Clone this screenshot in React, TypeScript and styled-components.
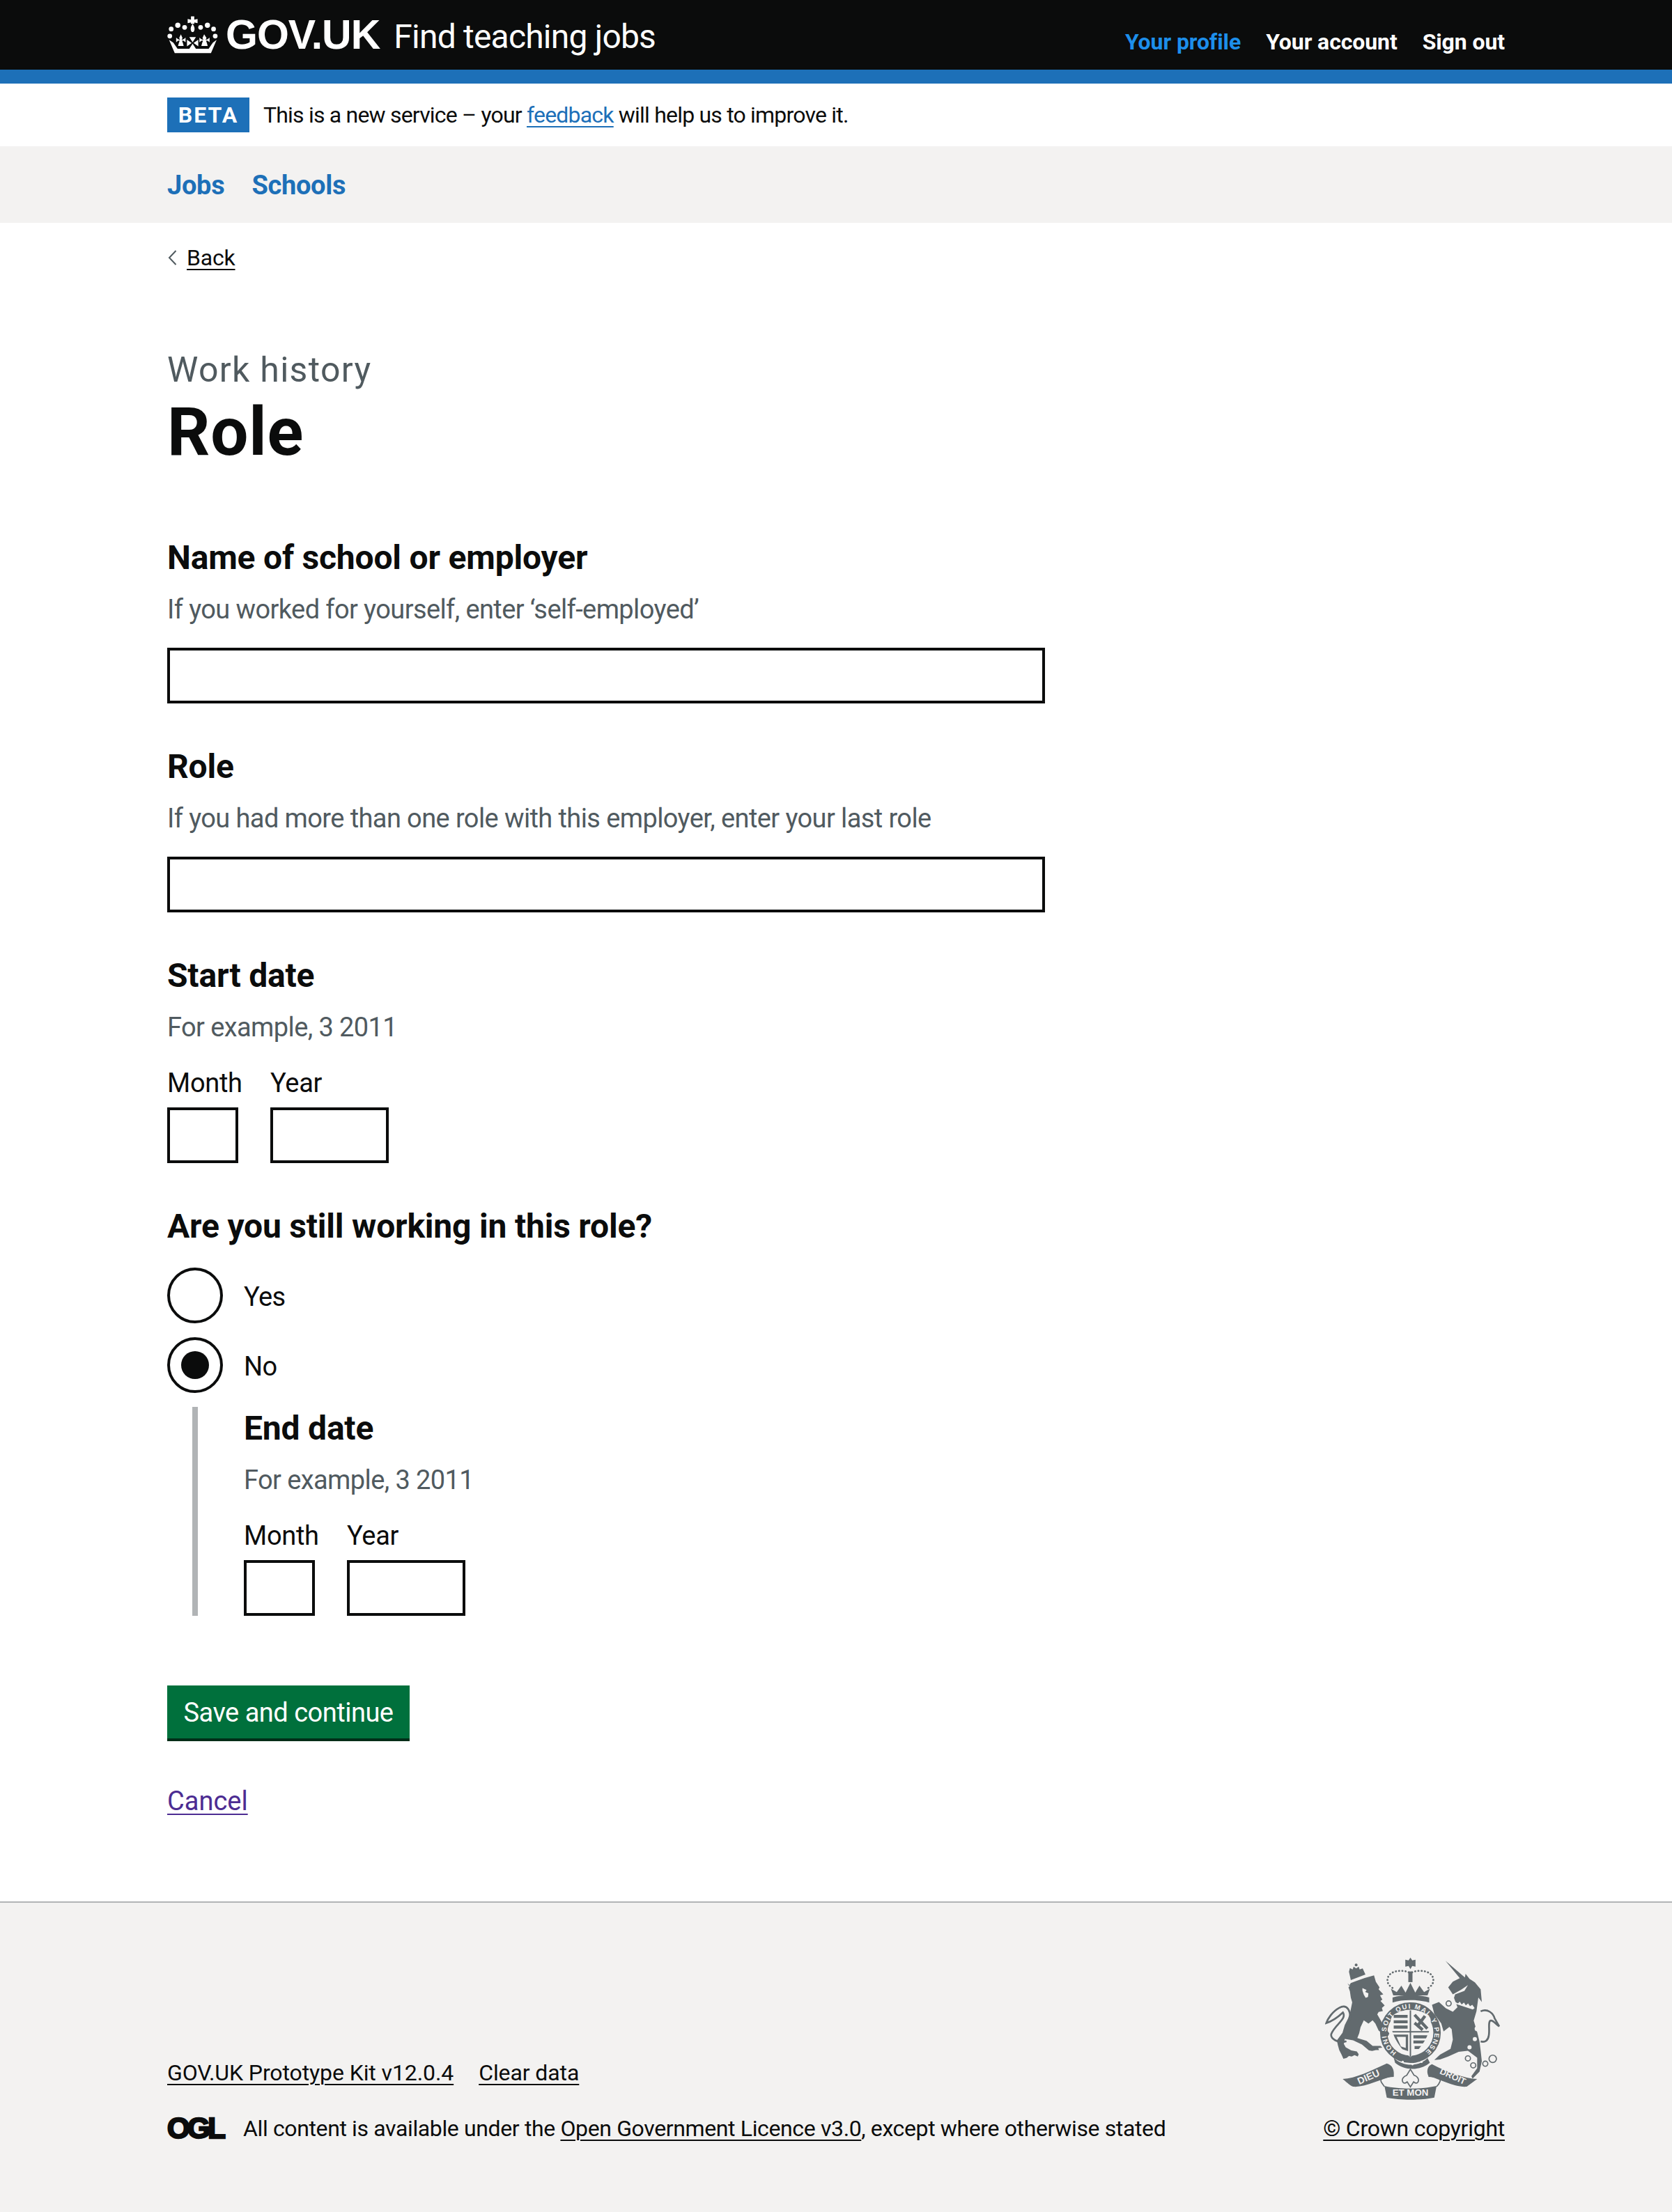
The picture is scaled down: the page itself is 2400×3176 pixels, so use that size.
import React from "react";
import styled, { createGlobalStyle } from "styled-components";

const GlobalStyle = createGlobalStyle`
  html, body {
    margin: 0;
    padding: 0;
    background: #fff;
  }
  body {
    font-family: Roboto, "Noto Sans", Arial, sans-serif;
    color: #0b0c0c;
    -webkit-font-smoothing: antialiased;
  }
`;

const Page = styled.div`
  width: 2400px;
  min-height: 3176px;
  display: flex;
  flex-direction: column;
`;

const Header = styled.header`
  height: 100px;
  background: #0b0c0c;
  border-bottom: 20px solid #1d70b8;
  padding: 0 240px;
  display: flex;
  align-items: center;
  justify-content: space-between;
`;

const Brand = styled.div`
  display: flex;
  align-items: center;
  color: #fff;
`;

const CrownLogo = styled.svg`
  width: 75px;
  height: 60px;
  margin-right: 9px;
  flex: none;
`;

const LogoText = styled.span`
  font-family: "Liberation Sans", Arial, sans-serif;
  font-weight: 700;
  font-size: 59px;
  line-height: 60px;
  letter-spacing: -1px;
`;

const ServiceName = styled.span`
  font-size: 48px;
  line-height: 60px;
  margin-left: 20px;
  padding-top: 5px;
  letter-spacing: -0.8px;
`;

const HeaderNav = styled.nav`
  display: flex;
  gap: 36px;
  padding-top: 20px;
`;

const HeaderLink = styled.a<{ $active?: boolean }>`
  font-size: 32px;
  line-height: 40px;
  font-weight: 700;
  letter-spacing: -0.1px;
  color: ${(props) => (props.$active ? "#1d8feb" : "#fff")};
`;

const Banner = styled.div`
  height: 90px;
  padding: 20px 240px 0;
  box-sizing: border-box;
  display: flex;
  align-items: flex-start;
  gap: 20px;
  font-size: 32px;
  line-height: 50px;
  letter-spacing: -0.8px;
`;

const Tag = styled.strong`
  width: 118px;
  height: 50px;
  background: #1d70b8;
  color: #fff;
  font-size: 32px;
  font-weight: 700;
  letter-spacing: 2px;
  text-align: center;
`;

const BlueLink = styled.a`
  color: #1d70b8;
  text-decoration: underline;
  text-underline-offset: 5px;
  text-decoration-thickness: 2px;
`;

const SubNav = styled.nav`
  height: 110px;
  box-sizing: border-box;
  padding: 2px 240px 0;
  background: #f3f2f1;
  display: flex;
  align-items: center;
  gap: 39px;
`;

const SubNavLink = styled.a`
  font-size: 38px;
  font-weight: 700;
  letter-spacing: -0.3px;
  color: #1d70b8;
`;

const Main = styled.main`
  padding: 28px 240px 0;
  height: 2410px;
  box-sizing: border-box;
  flex: none;
`;

const BackLink = styled.a`
  display: inline-flex;
  align-items: center;
  gap: 14px;
  font-size: 32px;
  line-height: 44px;
  letter-spacing: -0.2px;
  color: #0b0c0c;
  & > span {
    text-decoration: underline;
    text-underline-offset: 5px;
    text-decoration-thickness: 2px;
  }
`;

const Caption = styled.div`
  margin-top: 108px;
  padding-top: 2px;
  font-size: 50px;
  line-height: 58px;
  letter-spacing: 1.3px;
  color: #505a5f;
`;

const Title = styled.h1`
  margin: 10px 0 100px;
  font-size: 96px;
  line-height: 100px;
  font-weight: 700;
  letter-spacing: 0.8px;
`;

const Field = styled.div`
  margin-bottom: 60px;
`;

const Label = styled.div`
  padding-top: 2px;
  font-size: 48px;
  line-height: 58px;
  font-weight: 700;
  letter-spacing: -0.2px;
  margin-bottom: 20px;
`;

const Hint = styled.div`
  padding-top: 1px;
  font-size: 38px;
  line-height: 49px;
  letter-spacing: -0.6px;
  color: #505a5f;
  margin-bottom: 30px;
`;

const TextInput = styled.input`
  display: block;
  box-sizing: border-box;
  width: 1260px;
  height: 80px;
  border: 4px solid #0b0c0c;
  border-radius: 0;
  background: #fff;
  padding: 0;
`;

const DateRow = styled.div`
  display: flex;
  gap: 46px;
`;

const DatePart = styled.div<{ $width: number }>`
  width: ${(props) => props.$width}px;
  display: flex;
  flex-direction: column;
  gap: 10px;
`;

const DateLabel = styled.label`
  font-size: 38px;
  line-height: 50px;
  letter-spacing: -0.3px;
  white-space: nowrap;
`;

const DateInput = styled.input`
  display: block;
  box-sizing: border-box;
  width: 100%;
  height: 80px;
  border: 4px solid #0b0c0c;
  border-radius: 0;
  background: #fff;
  padding: 0;
`;

const Options = styled.div`
  display: flex;
  flex-direction: column;
  gap: 20px;
  margin-top: 30px;
`;

const Option = styled.label`
  display: flex;
  align-items: center;
  gap: 30px;
  height: 80px;
  font-size: 38px;
  letter-spacing: -0.6px;
  & > span:last-child {
    padding-top: 3px;
  }
`;

const RadioMark = styled.span<{ $checked?: boolean }>`
  width: 80px;
  height: 80px;
  box-sizing: border-box;
  border: 4px solid #0b0c0c;
  border-radius: 50%;
  display: flex;
  align-items: center;
  justify-content: center;
  &::after {
    content: "";
    display: ${(props) => (props.$checked ? "block" : "none")};
    width: 40px;
    height: 40px;
    border-radius: 50%;
    background: #0b0c0c;
  }
`;

const Conditional = styled.div`
  margin: 20px 0 0 36px;
  padding-left: 66px;
  border-left: 8px solid #b1b4b6;
`;

const SubmitButton = styled.button`
  display: block;
  margin-top: 100px;
  width: 348px;
  height: 80px;
  box-sizing: border-box;
  padding: 2px 0 0;
  border: 0;
  border-bottom: 4px solid #002d18;
  background: #00703c;
  color: #fff;
  font-family: inherit;
  font-size: 38px;
  line-height: 50px;
  letter-spacing: -0.5px;
`;

const CancelLink = styled.a`
  display: inline-block;
  margin-top: 61px;
  font-size: 38px;
  line-height: 50px;
  color: #4c2c92;
  text-decoration: underline;
  text-underline-offset: 5px;
  text-decoration-thickness: 2px;
`;

const Footer = styled.footer`
  flex: 1;
  background: #f3f2f1;
  border-top: 2px solid #b1b4b6;
  box-sizing: border-box;
  padding: 0 240px 100px;
  display: flex;
  justify-content: space-between;
  align-items: flex-end;
`;

const FooterLeft = styled.div`
  display: flex;
  flex-direction: column;
  gap: 40px;
`;

const FooterLinks = styled.div`
  display: flex;
  gap: 36px;
  letter-spacing: -0.1px;
`;

const FooterLink = styled.a`
  font-size: 32px;
  line-height: 40px;
  color: #0b0c0c;
  text-decoration: underline;
  text-underline-offset: 5px;
  text-decoration-thickness: 2px;
`;

const Licence = styled.div`
  display: flex;
  align-items: center;
  font-size: 32px;
  line-height: 40px;
  letter-spacing: -0.37px;
`;

const OglMark = styled.span`
  width: 82px;
  margin-right: 27px;
  font-family: "Liberation Sans", Arial, sans-serif;
  font-weight: 700;
  font-size: 42px;
  line-height: 40px;
  letter-spacing: -3.6px;
  -webkit-text-stroke: 2.5px #0b0c0c;
`;

const Copyright = styled.div`
  display: flex;
  flex-direction: column;
  align-items: flex-end;
  gap: 20px;
  letter-spacing: -0.25px;
`;

const Crest = styled.svg`
  width: 252px;
  height: 208px;
  margin-right: 6px;
`;

const CrestText = styled.text`
  font-family: "Liberation Sans", Arial, sans-serif;
  font-weight: 700;
  letter-spacing: 0;
  fill: #f3f2f1;
`;

const HeaderCrown = () => (
  <CrownLogo viewBox="30 25 222 175" aria-hidden="true">
    <g fill="#fff">
      <circle cx="47" cy="88" r="10" />
      <circle cx="75" cy="72" r="11" />
      <circle cx="104" cy="81" r="10" />
      <circle cx="172" cy="81" r="10" />
      <circle cx="201" cy="72" r="11" />
      <circle cx="227" cy="88" r="10" />
      <circle cx="41" cy="118" r="10" />
      <circle cx="234" cy="118" r="10" />
      <path d="M131 34h14v14l14-3v18l-14-3v6h-14v-6l-14 3V45l14 3z" />
      <path d="M138 66c7 10 9 18 8 24-1 7-4 11-8 11s-7-4-8-11c-1-6 1-14 8-24z" />
      <path d="M38 134l24 56h154l24-56-16 12-18 26H74l-18-26z" />
      <path d="M88 110l7 16-4 8 9-3 8-7v20l-8-6-7-1 4 12 3 11H76l3-11 4-12-7 1-8 6v-20l8 7 9 3-4-8z" />
      <path d="M187 110l-7 16 4 8-9-3-8-7v20l8-6 7-1-4 12-3 11h27l-3-11-4-12 7 1 8 6v-20l-8 7-9 3 4-8z" />
      <path d="M124 122h28l-14 22zM124 172h28l-14-22zM114 133v28l20-14zM162 133v28l-20-14z" />
    </g>
  </CrownLogo>
);

const RoyalCrest = () => (
  <Crest viewBox="130 60 755 625" aria-hidden="true">
    <defs>
      <path id="garter-ring" d="M437.3 477.2A104 104 0 1 1 556.7 477.2" />
      <clipPath id="shield-clip">
        <path d="M412 340c0-30 46-46 85-46s88 16 88 46c0 60-40 118-88 158-48-40-85-98-85-158z" />
      </clipPath>
    </defs>
    <g fill="#626a6e">
      {/* lion */}
      <path d="M232 190l8-12 22-8 38-14 40-11 8 28 16 24-4 8 20 22-14 4 10 18-8 6 18 20-12 10 4 14-18 4-6 10 30 52 22 30-4 10-14 6-10-14-18-14-14-30-12-14-18 14-20-14-14 30-6 26-8 20 40 12 26 22 34 0 8 8-18 2 4 8-14 0-16 4-14-2-30-26-38-18-36-6-4 22 8 14 24 14 24 4 8 12-4 10-14-6-12 6-12-2-10 8-14 4-8-18-10-20-6-22-4-20 24-32 10-34 14-28 10-30 8-40-6-20-4-28-6-16 6-8-10-10z" />
      <path d="M240 165l-8-36 4-16 12 6 4-12 11 8 11-8 4 12 13-4 12 26z" />
      <circle cx="263" cy="100" r="6" />
      <path d="M235 345c8-50-12-78-45-60-30 16-50 48-56 66 24-8 55-30 72-46 18 28-34 52-50 92-6 20 30 44 65 32" fill="none" stroke="#626a6e" strokeWidth="8" />
      <path d="M290 200l18 8-6 8 14 6-2 16-10 4-8-14-6-18z" fill="#f3f2f1" />
      {/* unicorn */}
      <path d="M648 82l84 72 3-16 17 22 23 15 25 30 5 55-15-20-8 60-12 40 15 50 10 40 5 40 5 45-10 45-30 30-5-10 25-35 0-45-40-30-40 5-45 20-35 13-25 2 25-23 45-25 10-40-5-45-35-35 25 25-25 20-10-35-30-40-10-40 30-12 30 27 30 15 20-20-15-40 5-15 40-15 15-25-30 20-35 20-20-30 20-25 30-15z" />
      <path d="M800 300c30-15 55 10 60 30l20 35c-15-10-25-25-35-25-15 0-5 40-10 65-3 20-15 30-35 25" fill="none" stroke="#626a6e" strokeWidth="8" />
      {/* crown */}
      <path d="M497 68l8 12 14-3v30l-14-3-8 14-8-14-14 3V77l14 3z" />
      <path d="M488 128h18v46h-18z" />
      <path d="M413 203l25 14 20-28 18 30 21-42 21 42 18-30 20 28 25-14-10 28H423z" />
      <path d="M420 240c42-14 112-14 158 0v22c-46-14-116-14-158 0z" />
    </g>
    <circle cx="497" cy="392" r="115" fill="none" stroke="#626a6e" strokeWidth="32" />
    <g fill="none" stroke="#626a6e" strokeWidth="8" strokeDasharray="1 13" strokeLinecap="round">
      <path d="M490 132c-30-14-92-8-92 34 0 18 14 30 28 36" />
      <path d="M504 132c30-14 92-8 92 34 0 18-14 30-28 36" />
    </g>
    <path d="M412 340c0-30 46-46 85-46s88 16 88 46c0 60-40 118-88 158-48-40-85-98-85-158z" fill="#f3f2f1" />
    <g clipPath="url(#shield-clip)" stroke="#626a6e" fill="none">
      <path d="M497 296v204M410 388h176" strokeWidth="6" />
      <path d="M425 322h60M425 345h60M425 368h60" strokeWidth="13" />
      <path d="M515 315l55 60M515 350l35 30M560 320l-30 40" strokeWidth="13" />
      <path d="M510 410h60M510 432h55M515 456h40" strokeWidth="13" />
      <path d="M430 405h52l0 60-30-10z" strokeWidth="10" />
    </g>
    <path d="M425 500c40 40 110 40 146 2l10 20c-40 34-110 36-150 0z" fill="#626a6e" />
    <g fill="#f3f2f1">
      <circle cx="464" cy="518" r="5" />
      <circle cx="506" cy="528" r="5" />
      <circle cx="545" cy="518" r="5" />
    </g>
    <g fill="#626a6e">
      {/* motto ribbon */}
      <path d="M205 592c55-2 125-37 190-67 24 5 34 30 30 55-55 10-125 50-175 45-15-5-35-25-45-33z" />
      <path d="M785 592c-55-2-135-32-195-64-20 7-25 32-15 52 45 10 115 50 165 45z" />
      <path d="M385 622c65 15 160 15 225 0l-10 50c-55 12-150 12-205 0z" />
    </g>
    <g fill="none" stroke="#626a6e" strokeWidth="5">
      <path d="M425 580c-30 2-60 6-55 22 4 10 12 18 15 23" />
      <path d="M575 580c30 2 55 6 50 22-4 10-10 18-15 23" />
      <path d="M497 550l16 26c14 4 24 18 16 30-5 6-12 4-18-2l-14 22-14-22c-6 6-13 8-18 2-8-12 2-26 16-30z" />
      <circle cx="662" cy="266" r="11" />
      <circle cx="652" cy="350" r="11" />
      <circle cx="745" cy="503" r="11" />
      <circle cx="768" cy="533" r="11" />
      <circle cx="820" cy="526" r="11" />
      <circle cx="852" cy="505" r="16" />
    </g>
    <g fill="#f3f2f1">
      <circle cx="785" cy="375" r="11" />
      <circle cx="775" cy="420" r="9" />
      <circle cx="752" cy="455" r="9" />
      <path d="M688 258l14 8 8-8 8 12 10-8 8 12 10-8 8 12 10-6 10 14-8 6-80-26z" />
    </g>
    <CrestText fontSize="29">
      <textPath href="#garter-ring" textLength="520">HONI SOIT QUI MAL Y PENSE</textPath>
    </CrestText>
    <CrestText fontSize="42" x="322" y="596" textAnchor="middle" transform="rotate(-24 322 596)">DIEU</CrestText>
    <CrestText fontSize="40" x="497" y="664" textAnchor="middle">ET MON</CrestText>
    <CrestText fontSize="38" x="675" y="592" textAnchor="middle" transform="rotate(24 675 592)">DROIT</CrestText>
  </Crest>
);

const ChevronLeft = () => (
  <svg width="14" height="24" viewBox="0 0 14 24" aria-hidden="true">
    <path d="M12.5 2 3 12l9.5 10" fill="none" stroke="#505a5f" strokeWidth="2" />
  </svg>
);

const DateFields = () => (
  <DateRow>
    <DatePart $width={102}>
      <DateLabel>Month</DateLabel>
      <DateInput />
    </DatePart>
    <DatePart $width={170}>
      <DateLabel>Year</DateLabel>
      <DateInput />
    </DatePart>
  </DateRow>
);

const App = () => (
  <Page>
    <GlobalStyle />
    <Header>
      <Brand>
        <HeaderCrown />
        <LogoText>GOV.UK</LogoText>
        <ServiceName>Find teaching jobs</ServiceName>
      </Brand>
      <HeaderNav>
        <HeaderLink $active>Your profile</HeaderLink>
        <HeaderLink>Your account</HeaderLink>
        <HeaderLink>Sign out</HeaderLink>
      </HeaderNav>
    </Header>
    <Banner>
      <Tag>BETA</Tag>
      <span>
        This is a new service – your <BlueLink>feedback</BlueLink> will help us
        to improve it.
      </span>
    </Banner>
    <SubNav>
      <SubNavLink>Jobs</SubNavLink>
      <SubNavLink>Schools</SubNavLink>
    </SubNav>
    <Main>
      <BackLink>
        <ChevronLeft />
        <span>Back</span>
      </BackLink>
      <Caption>Work history</Caption>
      <Title>Role</Title>
      <Field>
        <Label>Name of school or employer</Label>
        <Hint>If you worked for yourself, enter ‘self-employed’</Hint>
        <TextInput />
      </Field>
      <Field>
        <Label>Role</Label>
        <Hint>If you had more than one role with this employer, enter your last role</Hint>
        <TextInput />
      </Field>
      <Field>
        <Label>Start date</Label>
        <Hint>For example, 3 2011</Hint>
        <DateFields />
      </Field>
      <Label>Are you still working in this role?</Label>
      <Options>
        <Option>
          <RadioMark />
          <span>Yes</span>
        </Option>
        <Option>
          <RadioMark $checked />
          <span>No</span>
        </Option>
      </Options>
      <Conditional>
        <Label>End date</Label>
        <Hint>For example, 3 2011</Hint>
        <DateFields />
      </Conditional>
      <SubmitButton>Save and continue</SubmitButton>
      <CancelLink>Cancel</CancelLink>
    </Main>
    <Footer>
      <FooterLeft>
        <FooterLinks>
          <FooterLink>GOV.UK Prototype Kit v12.0.4</FooterLink>
          <FooterLink>Clear data</FooterLink>
        </FooterLinks>
        <Licence>
          <OglMark>OGL</OglMark>
          <span>
            All content is available under the{" "}
            <FooterLink>Open Government Licence v3.0</FooterLink>, except where
            otherwise stated
          </span>
        </Licence>
      </FooterLeft>
      <Copyright>
        <RoyalCrest />
        <FooterLink>© Crown copyright</FooterLink>
      </Copyright>
    </Footer>
  </Page>
);

export default App;
